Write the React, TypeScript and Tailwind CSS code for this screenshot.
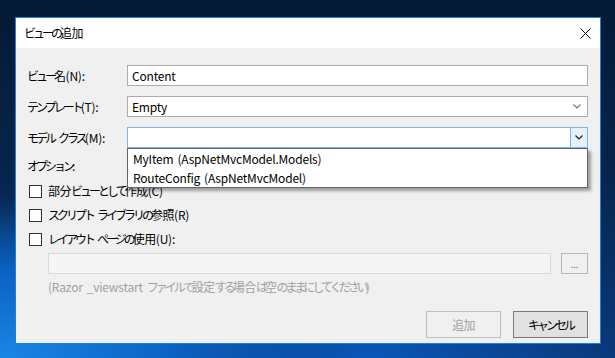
import React from "react";

const font = "font-['Noto_Sans_CJK_JP','Noto_Sans',sans-serif]";

// Yu Gothic UI has narrow kana; squeeze kana / kanji runs to get close to it
function T({ children }: { children: string }) {
  const parts = children.split(/([\u3040-\u30ff]+|[\u4e00-\u9fff]+| )/).filter(Boolean);
  return (
    <>
      {parts.map((p, i) =>
        /[\u3040-\u30ff]/.test(p) ? (
          <span key={i} className="tracking-[-3px]">{p}</span>
        ) : /[\u4e00-\u9fff]/.test(p) ? (
          <span key={i} className="tracking-[-0.5px]">{p}</span>
        ) : p === " " ? (
          <span key={i} className="inline-block w-[4px]" />
        ) : (
          <span key={i} className="tracking-[-0.2px]">{p}</span>
        )
      )}
    </>
  );
}

function Chevron({ className = "" }: { className?: string }) {
  return (
    <svg width="8" height="5" viewBox="0 0 8 5" className={className}>
      <path d="M0.5 0.5 L4 4 L7.5 0.5" fill="none" stroke="currentColor" strokeWidth="1.2" />
    </svg>
  );
}

function Checkbox({ label }: { label: string }) {
  return (
    <div className="h-[24px] flex items-center pl-[2px]">
      <div className="w-[13px] h-[13px] border border-[#333333] bg-white" />
      <span className="ml-[6px] text-[12px] leading-[16px] text-black"><T>{label}</T></span>
    </div>
  );
}

export default function App() {
  return (
    <div
      className={`${font} w-[615px] h-[358px] overflow-hidden pl-[15px] pt-[17px] bg-[radial-gradient(ellipse_70%_60%_at_0%_100%,#1a86e6_0%,#0b62c4_40%,transparent_75%),radial-gradient(ellipse_50%_40%_at_60%_100%,#0a56b8_0%,transparent_80%),linear-gradient(180deg,#041a35_0%,#06244a_45%,#0a3a7c_100%)]`}
    >
      <div className="w-[586px] h-[327px] border border-[#1883d7] bg-[#f0f0f0] flex flex-col">
        {/* title bar */}
        <div className="h-[30px] bg-white flex items-center justify-between pl-[8px] pr-[9px]">
          <span className="text-[12px] leading-[16px] text-black"><T>ビューの追加</T></span>
          <svg width="11" height="11" viewBox="0 0 11 11">
            <path d="M0.5 0.5 L10.5 10.5 M10.5 0.5 L0.5 10.5" stroke="#000" strokeWidth="1" />
          </svg>
        </div>

        {/* body */}
        <div className="relative flex-1 flex flex-col pl-[11px] pr-[12px] pt-[17px]">
          <div className="flex flex-col gap-[10px]">
            <div className="flex items-center">
              <span className="w-[100px] text-[12px] leading-[16px] text-black"><T>ビュー名(N):</T></span>
              <div className="flex-1 h-[21px] border border-[#acacac] bg-white flex items-center pl-[4px] text-[12px] text-black">
                <T>Content</T>
              </div>
            </div>
            <div className="flex items-center">
              <span className="w-[100px] text-[12px] leading-[16px] text-black"><T>テンプレート(T):</T></span>
              <div className="flex-1 h-[21px] border border-[#acacac] bg-white flex items-center justify-between pl-[4px] pr-[6px] text-[12px] text-black">
                <span><T>Empty</T></span>
                <Chevron className="text-[#7a7a7a]" />
              </div>
            </div>
            <div className="flex items-center">
              <span className="w-[100px] text-[12px] leading-[16px] text-black"><T>モデル クラス(M):</T></span>
              <div className="flex-1 h-[21px] border border-[#7eb4ea] bg-white flex justify-end">
                <div className="w-[17px] h-full border-l border-[#7eb4ea] bg-[#e5f1fb] flex items-center justify-center">
                  <Chevron className="text-[#222222]" />
                </div>
              </div>
            </div>
          </div>

          <span className="mt-[10px] text-[12px] leading-[16px] text-black"><T>オプション:</T></span>

          <div className="mt-[5px] flex flex-col">
            <Checkbox label="部分ビューとして作成(C)" />
            <Checkbox label="スクリプト ライブラリの参照(R)" />
            <Checkbox label="レイアウト ページの使用(U):" />
          </div>

          <div className="mt-[2px] pl-[21px] flex items-center gap-[10px]">
            <div className="flex-1 h-[21px] border border-[#d9d9d9] bg-[#f5f5f5]" />
            <div className="w-[27px] h-[21px] border border-[#b5b5b5] bg-[#f0f0f0] flex items-end justify-center pb-[4px]">
              <span className="text-[9px] leading-[9px] text-[#6d6d6d]">...</span>
            </div>
          </div>

          <span className="mt-[5px] pl-[21px] text-[12px] leading-[16px] text-[#a0a0a0]">
            <T>(Razor _viewstart ファイルで設定する場合は空のままにしてください)</T>
          </span>

          <div className="mt-[16px] flex justify-end gap-[12px]">
            <div className="w-[75px] h-[27px] border border-[#bfbfbf] bg-[#f0f0f0] flex items-center justify-center text-[12px] text-[#a0a0a0]">
              <T>追加</T>
            </div>
            <div className="w-[75px] h-[27px] border border-[#7a7a7a] bg-[#e1e1e1] flex items-center justify-center text-[12px] text-black">
              <T>キャンセル</T>
            </div>
          </div>

          {/* open dropdown list */}
          <div className="absolute left-[111px] top-[100px] w-[461px] border border-[#646464] bg-white shadow-[3px_3px_3px_rgba(0,0,0,0.35)]">
            <div className="h-[19px] flex items-center pl-[5px] text-[12px] text-black">
              <T>MyItem (AspNetMvcModel.Models)</T>
            </div>
            <div className="h-[19px] flex items-center pl-[5px] text-[12px] text-black">
              <T>RouteConfig (AspNetMvcModel)</T>
            </div>
          </div>
        </div>
      </div>
    </div>
  );
}
